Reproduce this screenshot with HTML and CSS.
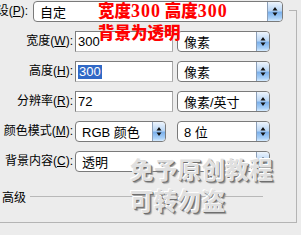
FILE: index.html
```html
<!DOCTYPE html>
<html lang="zh">
<head>
<meta charset="utf-8">
<link rel="stylesheet" href="styles.css">
</head>
<body>
<div class="panel">
  <div class="rows">
    <div class="row">
      <span class="lbl lbl-short"><span class="lbl-in">预设(<u>P</u>):</span></span>
      <div class="sel w-preset"><span class="val">自定</span><span class="arrow"><svg width="14" height="19" viewBox="0 0 14 19"><path d="M7 5 L9.5 8.5 H4.5 Z M7 14 L9.5 10.5 H4.5 Z" fill="#111"/></svg></span></div>
    </div>
    <div class="row">
      <span class="lbl">宽度(<u>W</u>):</span>
      <div class="inp"><span class="val">300</span></div>
      <div class="sel w-unit"><span class="val">像素</span><span class="arrow"><svg width="12" height="19" viewBox="0 0 12 19"><path d="M6 5 L8.5 8.5 H3.5 Z M6 14 L8.5 10.5 H3.5 Z" fill="#111"/></svg></span></div>
    </div>
    <div class="row">
      <span class="lbl">高度(<u>H</u>):</span>
      <div class="inp"><span class="val"><span class="hl">300</span></span></div>
      <div class="sel w-unit"><span class="val">像素</span><span class="arrow"><svg width="12" height="19" viewBox="0 0 12 19"><path d="M6 5 L8.5 8.5 H3.5 Z M6 14 L8.5 10.5 H3.5 Z" fill="#111"/></svg></span></div>
    </div>
    <div class="row">
      <span class="lbl">分辨率(<u>R</u>):</span>
      <div class="inp"><span class="val">72</span></div>
      <div class="sel w-unit"><span class="val">像素/英寸</span><span class="arrow"><svg width="12" height="19" viewBox="0 0 12 19"><path d="M6 5 L8.5 8.5 H3.5 Z M6 14 L8.5 10.5 H3.5 Z" fill="#111"/></svg></span></div>
    </div>
    <div class="row">
      <span class="lbl">颜色模式(<u>M</u>):</span>
      <div class="sel w-mode"><span class="val">RGB 颜色</span><span class="arrow"><svg width="12" height="19" viewBox="0 0 12 19"><path d="M6 5 L8.5 8.5 H3.5 Z M6 14 L8.5 10.5 H3.5 Z" fill="#111"/></svg></span></div>
      <div class="sel w-unit gap-l"><span class="val">8 位</span><span class="arrow"><svg width="12" height="19" viewBox="0 0 12 19"><path d="M6 5 L8.5 8.5 H3.5 Z M6 14 L8.5 10.5 H3.5 Z" fill="#111"/></svg></span></div>
    </div>
    <div class="row">
      <span class="lbl">背景内容(<u>C</u>):</span>
      <div class="sel w-bg"><span class="val">透明</span><span class="arrow"><svg width="12" height="19" viewBox="0 0 12 19"><path d="M6 5 L8.5 8.5 H3.5 Z M6 14 L8.5 10.5 H3.5 Z" fill="#111"/></svg></span></div>
    </div>
  </div>
  <div class="adv"><span class="adv-lbl">高级</span><span class="rule"></span></div>
</div>
<div class="note">宽度<span class="num">300</span> 高度<span class="num">300</span><br>背景为透明</div>
<div class="mark">免予原创教程<br>可转勿盗</div>
</body>
</html>
```

FILE: styles.css
```css
html, body {
  margin: 0;
  padding: 0;
}
body {
  width: 301px;
  height: 235px;
  overflow: hidden;
  background: #ececec;
  position: relative;
  font-family: "Liberation Sans", "Noto Sans CJK SC", sans-serif;
  font-size: 12px;
  color: #000;
}
.panel {
  position: relative;
  box-sizing: border-box;
  width: 297px;
  height: 223px;
  border-right: 1px solid #b4b4b4;
  border-bottom: 1px solid #b4b4b4;
  padding-top: 1px;
}
.panel::before {
  content: "";
  position: absolute;
  top: 0;
  right: -1px;
  width: 8px;
  height: 10px;
  background: #ececec;
  border-bottom: 1px solid #b4b4b4;
}
.rows {
  display: flex;
  flex-direction: column;
  gap: 9px;
}
.row {
  display: flex;
  align-items: center;
  height: 21px;
}
.lbl {
  flex: 0 0 73px;
  min-width: 0;
  display: flex;
  justify-content: flex-end;
  white-space: nowrap;
  margin-right: 2px;
  line-height: 21px;
}
.lbl-short {
  flex-basis: 28px;
  width: 28px;
  margin-right: 5px;
}
.lbl-in {
  flex: 0 0 auto;
}
.lbl u {
  text-underline-offset: 1px;
}
.inp {
  box-sizing: border-box;
  width: 98px;
  height: 21px;
  background: #fff;
  border: 1px solid #7e7e7e;
  border-right-color: #a8a8a8;
  border-bottom-color: #bdbdbd;
  display: flex;
  align-items: center;
  padding-left: 1px;
  margin-right: 4px;
  font-size: 13px;
}
.hl {
  background: #3169c6;
  color: #fff;
  padding: 0 1px;
  line-height: 14px;
  display: inline-block;
}
.sel {
  box-sizing: border-box;
  flex: 0 0 auto;
  height: 21px;
  background: #fff;
  border: 1px solid #7a7a7a;
  border-radius: 4px;
  display: flex;
  align-items: stretch;
  overflow: hidden;
  font-size: 13px;
}
.sel .val {
  flex: 1;
  padding-left: 6px;
  display: flex;
  align-items: center;
  white-space: nowrap;
}
.arrow {
  flex: 0 0 auto;
  display: flex;
  border-left: 1px solid #8c9fb8;
  background: linear-gradient(#eef5fd 0%, #b9d6f5 45%, #7cb1ec 55%, #a9d0f7 85%, #d6ebff 100%);
  border-radius: 0 3px 3px 0;
}
.arrow svg {
  display: block;
}
.w-preset { width: 250px; }
.w-unit { width: 93px; }
.w-mode { width: 91px; }
.w-bg { width: 195px; }
.gap-l { margin-left: 11px; }
.inp .val {
  padding-left: 1px;
}
.adv {
  display: flex;
  align-items: center;
  height: 14px;
  margin-top: 17px;
  padding-left: 2px;
}
.adv-lbl {
  margin-right: 4px;
}
.rule {
  width: 233px;
  height: 1px;
  background: #b8b8b8;
}
.note {
  position: absolute;
  left: 98px;
  top: 0;
  color: #ff0000;
  font-family: "Noto Sans CJK SC", sans-serif;
  font-weight: 900;
  font-size: 16.5px;
  line-height: 21px;
  white-space: nowrap;
}
.note .num {
  font-family: "Liberation Serif", serif;
  font-weight: 700;
  font-size: 18px;
  letter-spacing: 1px;
}
.mark {
  position: absolute;
  left: 130px;
  top: 154px;
  font-family: "Noto Sans CJK SC", sans-serif;
  font-weight: 700;
  font-size: 23.5px;
  line-height: 31px;
  letter-spacing: 0.4px;
  color: #e0e0e0;
  text-shadow: -1px -1px 0 #fff, 1px 1px 0 #6e6e6e, 2px 2px 1px #9a9a9a;
  white-space: nowrap;
}
```
